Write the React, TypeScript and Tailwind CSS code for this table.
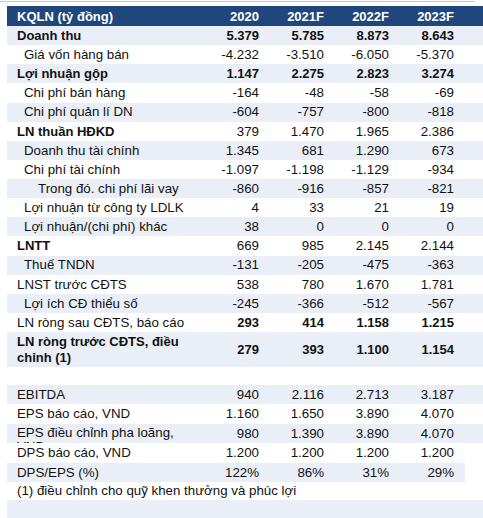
import React from "react";

type Row = {
  label: React.ReactNode;
  values: string[];
  lb?: boolean;
  vb?: boolean;
  indent?: 0 | 1 | 2;
  light?: boolean;
  tall?: boolean;
};

const rows: Row[] = [
  { label: "Doanh thu", values: ["5.379", "5.785", "8.873", "8.643"], lb: true, vb: true, light: true },
  { label: "Giá vốn hàng bán", values: ["-4.232", "-3.510", "-6.050", "-5.370"], indent: 1 },
  { label: "Lợi nhuận gộp", values: ["1.147", "2.275", "2.823", "3.274"], lb: true, vb: true, light: true },
  { label: "Chi phí bán hàng", values: ["-164", "-48", "-58", "-69"], indent: 1 },
  { label: "Chi phí quản lí DN", values: ["-604", "-757", "-800", "-818"], indent: 1, light: true },
  { label: "LN thuần HĐKD", values: ["379", "1.470", "1.965", "2.386"], lb: true },
  { label: "Doanh thu tài chính", values: ["1.345", "681", "1.290", "673"], indent: 1, light: true },
  { label: "Chi phí tài chính", values: ["-1.097", "-1.198", "-1.129", "-934"], indent: 1 },
  { label: "Trong đó. chi phí lãi vay", values: ["-860", "-916", "-857", "-821"], indent: 2, light: true },
  { label: "Lợi nhuận từ công ty LDLK", values: ["4", "33", "21", "19"], indent: 1 },
  { label: "Lợi nhuận/(chi phí) khác", values: ["38", "0", "0", "0"], indent: 1, light: true },
  { label: "LNTT", values: ["669", "985", "2.145", "2.144"], lb: true },
  { label: "Thuế TNDN", values: ["-131", "-205", "-475", "-363"], indent: 1, light: true },
  { label: "LNST trước CĐTS", values: ["538", "780", "1.670", "1.781"] },
  { label: "Lợi ích CĐ thiểu số", values: ["-245", "-366", "-512", "-567"], indent: 1, light: true },
  { label: "LN ròng sau CĐTS, báo cáo", values: ["293", "414", "1.158", "1.215"], vb: true },
];

const indentCls = ["pl-[10px]", "pl-[17px]", "pl-[31px]"];

function Values({ values, bold }: { values: string[]; bold?: boolean }) {
  return (
    <>
      {values.map((v, i) => (
        <div
          key={i}
          className={`w-[65px] shrink-0 text-right ${bold ? "font-bold text-[13px]" : "text-[13.3px]"}`}
        >
          {v}
        </div>
      ))}
      <div className="w-[29px] shrink-0" />
    </>
  );
}

function TRow({ r }: { r: Row }) {
  return (
    <div
      className={`flex items-center h-[19.125px] ${r.light ? "bg-[#e9eef7]" : "bg-white"}`}
    >
      <div
        className={`flex-1 whitespace-nowrap ${indentCls[r.indent ?? 0]} ${
          r.lb ? "font-bold text-[13px]" : "text-[13.3px]"
        }`}
      >
        {r.label}
      </div>
      <Values values={r.values} bold={r.vb} />
    </div>
  );
}

function Row2({ label, values, light, narrow }: { label: string; values: string[]; light?: boolean; narrow?: boolean }) {
  return (
    <div className={`flex items-center h-[19.4px] ${light ? "bg-[#e9eef7]" : "bg-white"} ${narrow ? "w-[458px]" : ""}`}>
      <div className="flex-1 whitespace-nowrap pl-[10px] text-[13.3px]">{label}</div>
      <Values values={values} />
      {narrow ? <div className="-ml-[18px]" /> : null}
    </div>
  );
}

export default function App() {
  return (
    <div
      className="w-[483px] h-[518px] bg-white text-[#111] overflow-hidden leading-none"
      style={{ fontFamily: '"Liberation Sans", Arial, sans-serif' }}
    >
      <div className="mt-[1px] h-px w-[474px] bg-[#c6c6c6]" />
      <div className="ml-[7px] mt-[4px]">
        <div className="flex items-center h-[20px] bg-[#1f477b] text-white font-bold text-[13px]">
          <div className="flex-1 pl-[10px] whitespace-nowrap">KQLN (tỷ đồng)</div>
          <div className="w-[65px] text-right">2020</div>
          <div className="w-[65px] text-right">2021F</div>
          <div className="w-[65px] text-right">2022F</div>
          <div className="w-[65px] text-right">2023F</div>
          <div className="w-[29px]" />
        </div>
        {rows.map((r, i) => (
          <TRow key={i} r={r} />
        ))}
        <div className="flex items-center h-[35px] bg-[#e9eef7]">
          <div className="flex-1 pl-[10px] font-bold text-[13px] leading-[16px]">
            LN ròng trước CĐTS, điều
            <br />
            chỉnh (1)
          </div>
          <Values values={["279", "393", "1.100", "1.154"]} bold />
        </div>
        <div className="h-[18px] bg-white" />
        <Row2 label="EBITDA" values={["940", "2.116", "2.713", "3.187"]} light />
        <Row2 label="EPS báo cáo, VND" values={["1.160", "1.650", "3.890", "4.070"]} />
        <div className="flex h-[19.4px] bg-[#e9eef7] overflow-hidden">
          <div className="flex-1 pl-[10px] text-[13.3px] leading-[14px] pt-[2px]">
            EPS điều chỉnh pha loãng,
            <br />
            VND
          </div>
          <div className="flex items-center">
            <Values values={["980", "1.390", "3.890", "4.070"]} />
          </div>
        </div>
        <Row2 label="DPS báo cáo, VND" values={["1.200", "1.200", "1.200", "1.200"]} />
        <div className="flex items-center h-[19.4px] bg-[#e9eef7] w-[458px]">
          <div className="flex-1 whitespace-nowrap pl-[10px] text-[13.3px]">DPS/EPS (%)</div>
          {["122%", "86%", "31%", "29%"].map((v, i) => (
            <div key={i} className="w-[65px] shrink-0 text-right text-[13.3px]">
              {v}
            </div>
          ))}
          <div className="w-[11px] shrink-0" />
        </div>
        <div className="flex items-center h-[18px] bg-white">
          <div className="pl-[10px] whitespace-nowrap text-[13.3px]">
            (1) điều chỉnh cho quỹ khen thưởng và phúc lợi
          </div>
        </div>
        <div className="h-[20px] bg-[#e9eef7]" />
      </div>
    </div>
  );
}
